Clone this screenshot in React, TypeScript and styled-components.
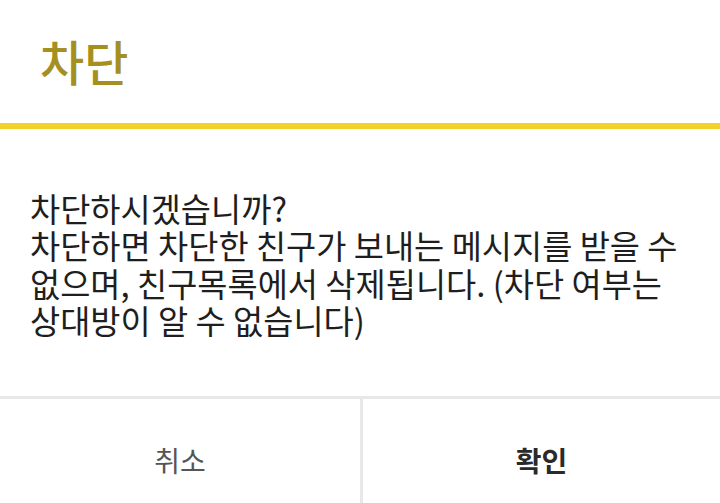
import React from "react";
import styled, { createGlobalStyle } from "styled-components";

const Global = createGlobalStyle`
  html, body { margin: 0; padding: 0; background: #ffffff; }
  body { font-family: "Noto Sans CJK KR", "Noto Sans", sans-serif; overflow: hidden; }
  #root { width: 720px; height: 503px; }
`;

const Dialog = styled.div`
  width: 720px;
  height: 503px;
  display: flex;
  flex-direction: column;
  background: #ffffff;
  overflow: hidden;
`;

const Header = styled.div`
  height: 129px;
  box-sizing: border-box;
  border-bottom: 6px solid #f0d22a;
  display: flex;
  align-items: center;
  padding: 0 0 0 40px;
  flex-shrink: 0;
`;

const Title = styled.h1`
  margin: 0;
  font-size: 48px;
  font-weight: 500;
  color: #a48f1f;
  line-height: 1;
  position: relative;
  top: -2px;
`;

const Body = styled.div`
  height: 267px;
  box-sizing: border-box;
  padding: 0 20px 0 30px;
  display: flex;
  align-items: center;
  flex-shrink: 0;
`;

const Message = styled.p`
  margin: 0;
  font-size: 32.8px;
  line-height: 37.5px;
  color: #1e1e1e;
  font-weight: 400;
  word-break: keep-all;
  position: relative;
  top: 1px;
`;

const Actions = styled.div`
  flex: 1;
  display: grid;
  grid-template-columns: 1fr 1fr;
  border-top: 3px solid #e8e8e8;
`;

const ActionButton = styled.button<{ $primary?: boolean }>`
  border: none;
  background: #ffffff;
  font-family: "Noto Sans CJK KR", "Noto Sans", sans-serif;
  font-size: 28px;
  font-weight: ${(p) => (p.$primary ? 700 : 400)};
  color: ${(p) => (p.$primary ? "#2a2a2a" : "#555555")};
  padding: 17px 0 0 0;
  cursor: pointer;
  & + & {
    border-left: 3px solid #e8e8e8;
  }
`;

export default function App() {
  return (
    <>
      <Global />
      <Dialog>
        <Header>
          <Title>차단</Title>
        </Header>
        <Body>
          <Message>
            차단하시겠습니까?
            <br />
            차단하면 차단한 친구가 보내는 메시지를 받을 수 없으며, 친구목록에서 삭제됩니다. (차단 여부는 상대방이 알 수 없습니다)
          </Message>
        </Body>
        <Actions>
          <ActionButton>취소</ActionButton>
          <ActionButton $primary>확인</ActionButton>
        </Actions>
      </Dialog>
    </>
  );
}
